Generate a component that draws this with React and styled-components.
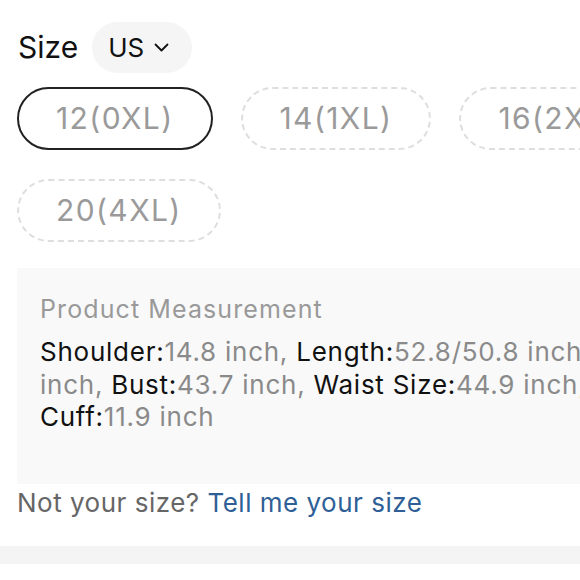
import React from "react";
import styled, { createGlobalStyle } from "styled-components";

const Global = createGlobalStyle`
  html, body { margin: 0; padding: 0; background: #fff; overflow: hidden; }
  body { font-family: Inter, "Noto Sans", sans-serif; -webkit-font-smoothing: antialiased; }
`;

const Page = styled.div`
  width: 900px;
  padding: 22px 0 0 17px;
  box-sizing: border-box;
`;

const Header = styled.div`
  display: flex;
  align-items: center;
  gap: 14px;
  height: 51px;
`;

const Label = styled.span`
  font-size: 30px;
  line-height: 51px;
  color: #111;
  padding-left: 1px;
`;

const UnitPill = styled.button`
  display: flex;
  align-items: center;
  gap: 10px;
  height: 51px;
  padding: 0 23px 0 16px;
  border: none;
  border-radius: 26px;
  background: #f5f5f5;
  font-family: inherit;
  font-size: 26px;
  line-height: 51px;
  color: #111;
`;

const Sizes = styled.div`
  display: flex;
  flex-wrap: wrap;
  gap: 29px 28px;
  margin-top: 14px;
`;

const SizePill = styled.div`
  box-sizing: border-box;
  height: 63px;
  padding: 0 37px;
  border-radius: 32px;
  border: 2px ${(p) => (p.$active ? "solid #222" : "dashed #dedede")};
  font-size: 30px;
  line-height: 59px;
  letter-spacing: 1.4px;
  color: #9a9a9a;
  white-space: nowrap;
`;

const Measure = styled.div`
  margin-top: 26px;
  height: 216px;
  box-sizing: border-box;
  padding: 26px 22px 0 23px;
  background: #f9f9f9;
`;

const MeasureTitle = styled.div`
  font-size: 25px;
  line-height: 30px;
  letter-spacing: 1.1px;
  color: #999;
`;

const MeasureText = styled.div`
  margin-top: 12px;
  font-size: 26px;
  line-height: 32.5px;
  letter-spacing: 0.75px;
  color: #8a8a8a;
  white-space: nowrap;
`;

const Key = styled.span`
  color: #111;
`;

const Hint = styled.div`
  margin-top: 3px;
  font-size: 26px;
  line-height: 32px;
  letter-spacing: 0.5px;
  color: #666;
`;

const Link = styled.a`
  color: #2f5f96;
  text-decoration: none;
`;

const Band = styled.div`
  margin-top: 27px;
  height: 18px;
  width: 100%;
  background: #f4f4f4;
`;

const Chevron = () => (
  <svg width="15" height="9" viewBox="0 0 15 9" fill="none">
    <path d="M1.5 1.5 L7.5 7.5 L13.5 1.5" stroke="#111" strokeWidth="1.8" strokeLinecap="round" strokeLinejoin="round" />
  </svg>
);

const sizes = ["12(0XL)", "14(1XL)", "16(2XL)", "18(3XL)", "20(4XL)"];

const lines = [
  [["Shoulder", "14.8 inch, "], ["Length", "52.8/50.8 inch, "], ["Sleeve Length", "23.6"]],
  [[null, "inch, "], ["Bust", "43.7 inch, "], ["Waist Size", "44.9 inch, "], ["Hip Size", "47.2 inch,"]],
  [["Cuff", "11.9 inch"]],
];

export default function App() {
  return (
    <>
      <Global />
      <Page>
        <Header>
          <Label>Size</Label>
          <UnitPill>
            US
            <Chevron />
          </UnitPill>
        </Header>
        <Sizes>
          {sizes.map((s, i) => (
            <SizePill key={s} $active={i === 0}>
              {s}
            </SizePill>
          ))}
        </Sizes>
        <Measure>
          <MeasureTitle>Product Measurement</MeasureTitle>
          <MeasureText>
            {lines.map((line, li) => (
              <div key={li}>
                {line.map(([k, v], j) => (
                  <React.Fragment key={j}>
                    {k && <Key>{k}:</Key>}
                    {v}
                  </React.Fragment>
                ))}
              </div>
            ))}
          </MeasureText>
        </Measure>
        <Hint>
          Not your size? <Link>Tell me your size</Link>
        </Hint>
      </Page>
      <Band />
    </>
  );
}
